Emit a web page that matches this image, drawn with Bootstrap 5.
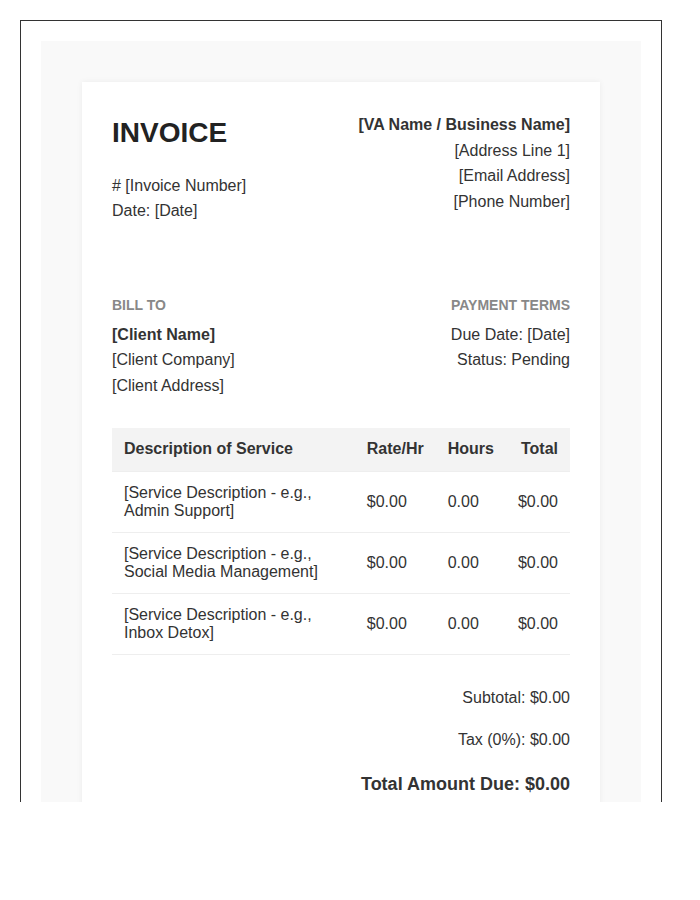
<!DOCTYPE html>
<html lang="en">
<head>
<meta charset="utf-8">
<title>Invoice</title>
<link href="https://cdn.jsdelivr.net/npm/bootstrap@5.3.0/dist/css/bootstrap.min.css" rel="stylesheet">
<style>
html,body{background:#fff;margin:0}
body{font-family:"Liberation Sans",Arial,sans-serif;font-size:16px;line-height:1.6;color:#333}
.viewport{margin:20px 0 0 20px;width:642px;height:782px;overflow:hidden}
.frame{border:1px solid #333;padding:20px;height:1100px}
.sheet{background:#f9f9f9;padding:41px;height:1000px}
.paper{background:#fff;padding:30px;height:900px;box-shadow:0 0 6px rgba(0,0,0,.06)}
.title{font-size:28px;font-weight:700;color:#222;line-height:32px;margin:5px 0 23.7px}
.head{height:182px}
.label{font-size:14px;font-weight:700;color:#888;text-transform:uppercase;line-height:22px;margin-bottom:5.7px}
.meta p,.head p{margin:0}
.invoice-table{width:100%;border-collapse:collapse;margin:29.3px 0 30px;line-height:18px;color:#333}
.invoice-table th,.invoice-table td{padding:12px;border-bottom:1px solid #eee;vertical-align:middle;text-align:left}
.invoice-table th{background:#f3f3f3;font-weight:700;padding-bottom:13px}
.invoice-table .end{text-align:right}
.sum p{margin:0 0 17px;text-align:right}
.sum .grand{font-size:18px;font-weight:700;margin-top:17px}
</style>
</head>
<body>
<div class="viewport">
<div class="frame">
<div class="sheet">
<div class="paper">
  <div class="head d-flex justify-content-between">
    <div>
      <div class="title">INVOICE</div>
      <p># [Invoice Number]</p>
      <p>Date: [Date]</p>
    </div>
    <div class="text-end">
      <p class="fw-bold">[VA Name / Business Name]</p>
      <p>[Address Line 1]</p>
      <p>[Email Address]</p>
      <p>[Phone Number]</p>
    </div>
  </div>
  <div class="meta d-flex justify-content-between">
    <div>
      <div class="label">Bill To</div>
      <p class="fw-bold">[Client Name]</p>
      <p>[Client Company]</p>
      <p>[Client Address]</p>
    </div>
    <div class="text-end">
      <div class="label">Payment Terms</div>
      <p>Due Date: [Date]</p>
      <p>Status: Pending</p>
    </div>
  </div>
  <table class="invoice-table">
    <thead>
      <tr><th>Description of Service</th><th>Rate/Hr</th><th>Hours</th><th class="end">Total</th></tr>
    </thead>
    <tbody>
      <tr><td>[Service Description - e.g., Admin Support]</td><td>$0.00</td><td>0.00</td><td class="end">$0.00</td></tr>
      <tr><td>[Service Description - e.g., Social Media Management]</td><td>$0.00</td><td>0.00</td><td class="end">$0.00</td></tr>
      <tr><td>[Service Description - e.g., Inbox Detox]</td><td>$0.00</td><td>0.00</td><td class="end">$0.00</td></tr>
    </tbody>
  </table>
  <div class="sum">
    <p>Subtotal: $0.00</p>
    <p>Tax (0%): $0.00</p>
    <p class="grand">Total Amount Due: $0.00</p>
  </div>
</div>
</div>
</div>
</div>
<script src="https://cdn.jsdelivr.net/npm/bootstrap@5.3.0/dist/js/bootstrap.bundle.min.js"></script>
</body>
</html>
